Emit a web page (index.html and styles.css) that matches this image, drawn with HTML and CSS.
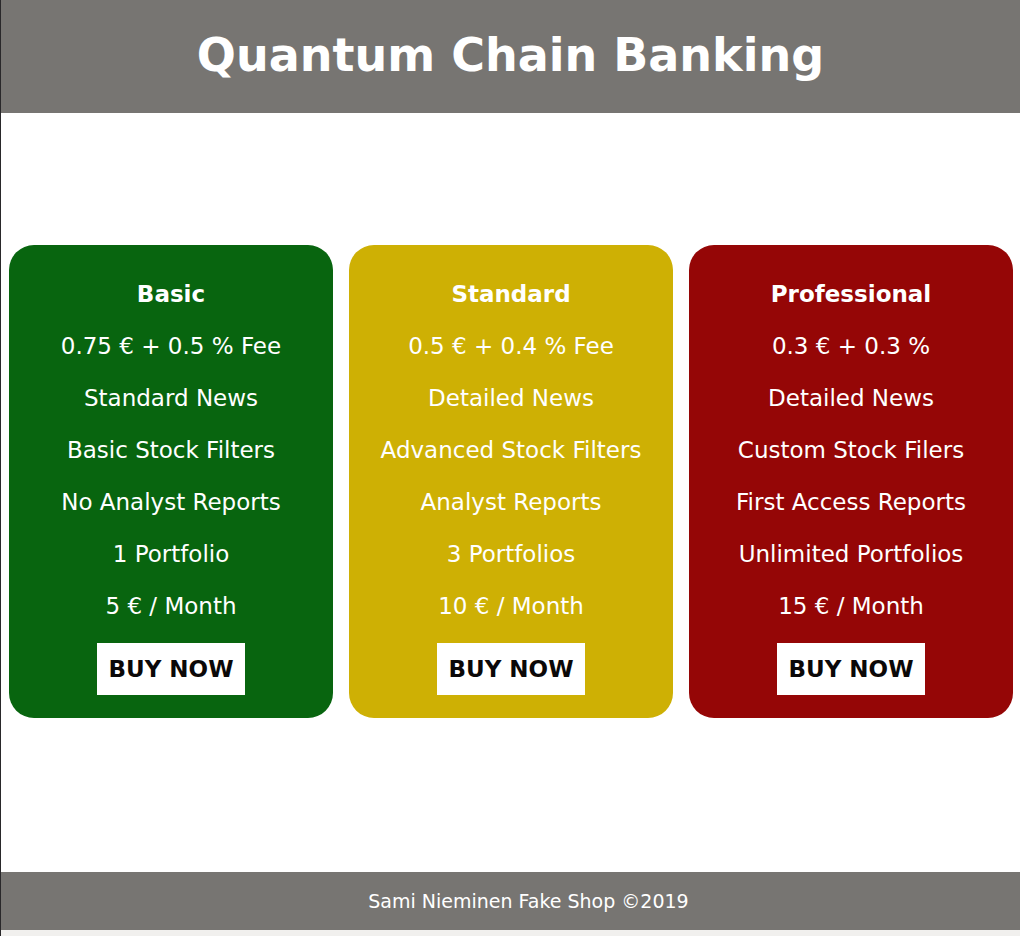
FILE: index.html
```html
<!DOCTYPE html>
<html lang="en" class="root">
<head>
<meta charset="utf-8">
<meta name="viewport" content="width=device-width, initial-scale=1">
<title>Quantum Chain Banking</title>
<link rel="stylesheet" href="styles.css">
</head>
<body class="page">
<header class="header"><h1 class="title">Quantum Chain Banking</h1></header>
<main class="plans">
  <section class="card basic">
    <h2 class="name">Basic</h2>
    <ul class="features">
      <li>0.75 € + 0.5 % Fee</li>
      <li>Standard News</li>
      <li>Basic Stock Filters</li>
      <li>No Analyst Reports</li>
      <li>1 Portfolio</li>
      <li>5 € / Month</li>
    </ul>
    <button class="buy" type="button">BUY NOW</button>
  </section>
  <section class="card standard">
    <h2 class="name">Standard</h2>
    <ul class="features">
      <li>0.5 € + 0.4 % Fee</li>
      <li>Detailed News</li>
      <li>Advanced Stock Filters</li>
      <li>Analyst Reports</li>
      <li>3 Portfolios</li>
      <li>10 € / Month</li>
    </ul>
    <button class="buy" type="button">BUY NOW</button>
  </section>
  <section class="card professional">
    <h2 class="name">Professional</h2>
    <ul class="features">
      <li>0.3 € + 0.3 %</li>
      <li>Detailed News</li>
      <li>Custom Stock Filers</li>
      <li>First Access Reports</li>
      <li>Unlimited Portfolios</li>
      <li>15 € / Month</li>
    </ul>
    <button class="buy" type="button">BUY NOW</button>
  </section>
</main>
<footer class="footer">Sami Nieminen Fake Shop ©2019</footer>
</body>
</html>
```
FILE: styles.css
```css
* {
  box-sizing: border-box;
}

.root {
  border-left: 1px solid #29282a;
}

.page {
  display: flex;
  flex-direction: column;
  min-height: 100vh;
  margin: 0;
  border-bottom: 6px solid #f1f0ee;
  background: #fff;
  color: #fff;
  font-family: "DejaVu Sans", sans-serif;
  font-size: 23px;
  text-align: center;
}

.header {
  padding: 27px 16px 29px;
  background: #777572;
}

.title {
  margin: 0;
  font-size: 46px;
  line-height: 57px;
}

.plans {
  flex: 1;
  display: grid;
  grid-template-columns: repeat(3, 1fr);
  align-content: start;
  gap: 16px;
  padding: 132px 7px 132px 8px;
}

.card {
  padding: 23px 16px;
  border-radius: 25px;
}

.basic {
  background: #08650f;
}

.standard {
  background: #ceb004;
}

.professional {
  background: #950606;
}

.name {
  margin: 0;
  font-size: 23px;
  line-height: 52px;
}

.features {
  margin: 0 0 11px;
  padding: 0;
  list-style: none;
  line-height: 52px;
}

.buy {
  padding: 0 11px;
  border: 0;
  background: #fff;
  color: #0b0808;
  font: bold 23px/52px "DejaVu Sans", sans-serif;
  vertical-align: top;
  cursor: pointer;
}

.footer {
  padding: 16px 0 16px 36px;
  background: #777572;
  font-size: 19px;
  line-height: 26px;
}
```
